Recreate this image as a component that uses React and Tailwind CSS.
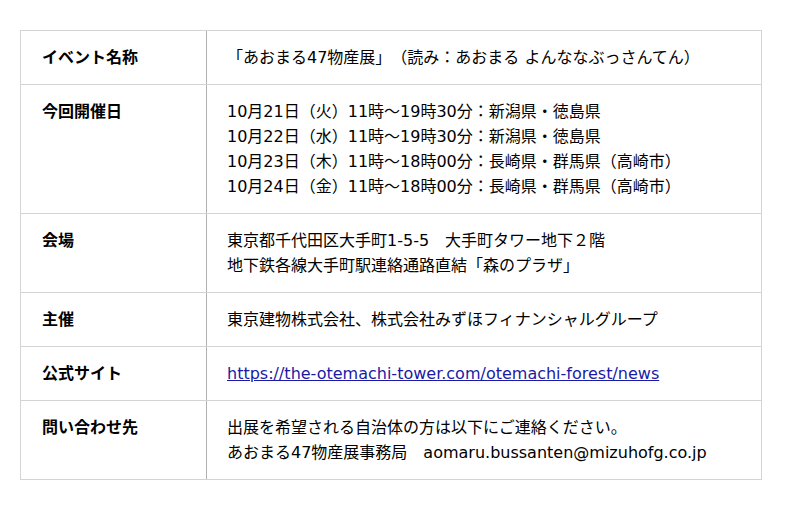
import React from 'react';

const rows = [
  { label: 'イベント名称', lines: ['「あおまる47物産展」（読み：あおまる よんななぶっさんてん）'] },
  {
    label: '今回開催日',
    lines: [
      '10月21日（火）11時～19時30分：新潟県・徳島県',
      '10月22日（水）11時～19時30分：新潟県・徳島県',
      '10月23日（木）11時～18時00分：長崎県・群馬県（高崎市）',
      '10月24日（金）11時～18時00分：長崎県・群馬県（高崎市）',
    ],
  },
  { label: '会場', lines: ['東京都千代田区大手町1-5-5　大手町タワー地下２階', '地下鉄各線大手町駅連絡通路直結「森のプラザ」'] },
  { label: '主催', lines: ['東京建物株式会社、株式会社みずほフィナンシャルグループ'] },
  { label: '公式サイト', link: 'https://the-otemachi-tower.com/otemachi-forest/news' },
  { label: '問い合わせ先', lines: ['出展を希望される自治体の方は以下にご連絡ください。', 'あおまる47物産展事務局　aomaru.bussanten@mizuhofg.co.jp'] },
];

export default function App() {
  return (
    <div
      className="min-h-[510px] bg-white px-5 pt-[30px] text-[16px] leading-[25px] text-black [text-spacing-trim:space-all]"
      style={{ fontFamily: '"DejaVu Sans", "Noto Sans CJK JP", sans-serif' }}
    >
      <div className="w-[742px] border border-[#d4d4d4]">
        {rows.map((r, i) => (
          <div key={i} className={`flex ${i > 0 ? 'border-t border-[#d4d4d4]' : ''}`}>
            <div className="w-[186px] shrink-0 border-r border-[#b0b0b0] px-[21px] py-[14px] font-bold">{r.label}</div>
            <div className="flex-1 px-5 py-[14px]">
              {r.link ? (
                <a href="#" className="text-[#1a1aa6] underline">{r.link}</a>
              ) : (
                r.lines.map((l, j) => <div key={j} className="whitespace-pre">{l}</div>)
              )}
            </div>
          </div>
        ))}
      </div>
    </div>
  );
}
